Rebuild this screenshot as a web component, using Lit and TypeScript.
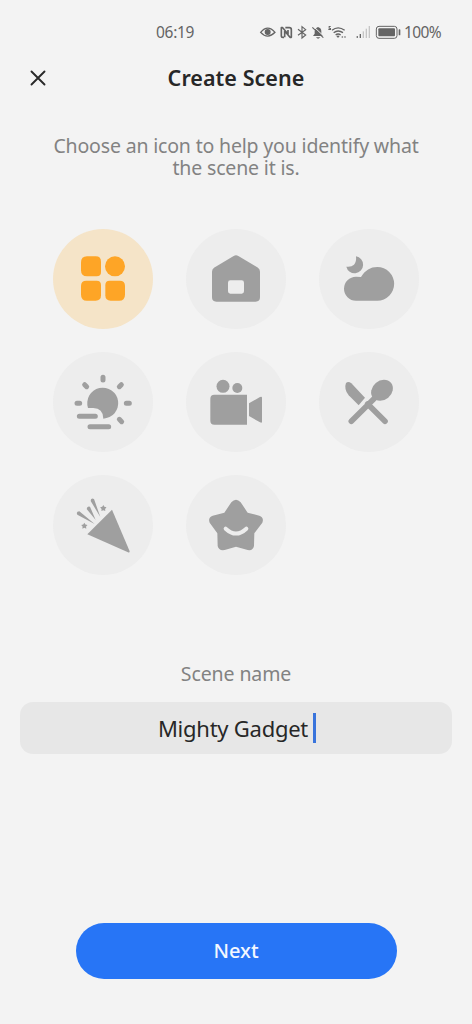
import { LitElement, html, svg, css } from "lit";
import { customElement, state } from "lit/decorators.js";

const star = (x: number, y: number, r: number) => {
  const pts: string[] = [];
  for (let i = 0; i < 10; i++) {
    const a = -Math.PI / 2 + (i * Math.PI) / 5;
    const q = i % 2 ? r * 0.55 : r;
    pts.push(`${(x + q * Math.cos(a)).toFixed(1)},${(y + q * Math.sin(a)).toFixed(1)}`);
  }
  return svg`<polygon points=${pts.join(" ")}/>`;
};

const icons = [
  {
    name: "Blocks",
    box: "24 27 300 300",
    art: svg`<path d="M126 109H152Q168 109 168 125V156Q168 169 155 169H126Q108 169 108 151V127Q108 109 126 109Z"/>
      <circle cx="210" cy="139" r="30"/>
      <path d="M124 182H155Q168 182 168 195V226Q168 242 152 242H126Q108 242 108 224V198Q108 182 124 182Z"/>
      <path d="M194 182H224Q240 182 240 198V224Q240 242 222 242H197Q181 242 181 226V195Q181 182 194 182Z"/>`,
  },
  {
    name: "Home",
    box: "30 27 300 300",
    art: svg`<path fill-rule="evenodd" d="M173 108Q180 103 187 108L246 143Q252 147 252 155V232Q252 245 239 245H121Q108 245 108 232V155Q108 147 114 143ZM163 181Q156 181 156 188V214Q156 221 163 221H197Q204 221 204 214V188Q204 181 197 181Z"/>`,
  },
  {
    name: "Night",
    box: "30 27 300 300",
    art: svg`<path d="M141 109A25.500 25.500 0 1 1 112 140Q127 142 135 134Q143 126 141 109Z"/>
      <path d="M141 242A36 36 0 0 1 141 170Q149 170 156 171C169 151 184 141 205 141A50.500 50.500 0 0 1 205 242Z"/>`,
  },
  {
    name: "Sunrise",
    box: "30 27 300 300",
    art: svg`<path d="M135 195A46.500 46.500 0 1 1 181 227Q180 195 151 195Z"/>
      <g class="line" stroke-width="15"><path d="M180 103V111M125 125L131 131M235 125L229 131M102 181H110M250 181H259M229 229L236 236M109 220H157M141 251H197"/></g>`,
  },
  {
    name: "Movie",
    box: "30 27 300 300",
    art: svg`<circle cx="141" cy="130" r="19.500"/><circle cx="184" cy="135" r="15"/>
      <path d="M115 155H213V245H115Q103 245 103 233V167Q103 155 115 155ZM219 181L252 162Q258 159 258 164V236Q258 241 252 238L219 219Z"/>`,
  },
  {
    name: "Dining",
    box: "30 27 300 300",
    art: svg`<path d="M111 120Q118 113 127 121L168 164L149 187L119 157Q104 138 111 120Z"/>
      <path class="line" stroke-width="17" d="M127 235L195 167M176 183L228 235"/>
      <ellipse cx="219" cy="142" rx="35" ry="29" transform="rotate(-40 219 142)"/>`,
  },
  {
    name: "Party",
    box: "30 27 300 300",
    art: svg`<path d="M207 131L260 256Q260 261 255 259L133 205Z"/>
      <path d="M109 136L155 174L103 146Q98 137 109 136ZM141 122L158 162L131 129Q132 119 141 122ZM153 99L172 153L143 105Q143 94 153 99Z"/>
      ${star(181, 127, 10)}${star(124, 180, 10)}`,
  },
  {
    name: "Star",
    box: "30 27 300 300",
    art: svg`<path d="M166 109Q180 94 194 109L215 140L250 149Q265 155 259 170L235 202L234 240Q231 255 215 252L180 242L146 252Q128 255 125 240L124 202L101 170Q95 155 110 149L145 140Z"/>
      <path class="smile" d="M149 188Q180 217 211 188"/>`,
  },
];

@customElement("app-root")
export class AppRoot extends LitElement {
  @state() private selected = 0;

  static styles = css`
    :host {
      display: flex;
      flex-direction: column;
      align-items: center;
      box-sizing: border-box;
      width: 100%;
      height: 1024px;
      background: #f3f3f3;
      font-family: "Noto Sans", sans-serif;
      color: #272727;
      overflow: hidden;
    }
    .status {
      display: flex;
      align-items: center;
      align-self: stretch;
      height: 24px;
      padding: 20px 30px 0 156px;
      font-size: 15.5px;
      color: #646464;
      white-space: nowrap;
    }
    .time { flex: 1; letter-spacing: -0.3px; }
    .signals { width: 144px; height: 16px; display: block; }
    .battery { width: 38px; margin-left: 2px; letter-spacing: -0.6px; }
    .header {
      display: grid;
      grid-template-columns: 16px 1fr 16px;
      align-items: center;
      align-self: stretch;
      height: 36px;
      padding: 0 30px;
      margin-top: 16px;
    }
    .close {
      border: 0;
      padding: 0;
      background: none;
      height: 16px;
    }
    .close svg { display: block; width: 16px; height: 16px; }
    h1 {
      margin: 0;
      text-align: center;
      font-size: 21.5px;
      line-height: 30px;
      font-weight: 600;
      letter-spacing: 0.05px;
    }
    .hint {
      margin: 39px 0 0;
      width: 380px;
      text-align: center;
      font-size: 19.5px;
      line-height: 22px;
      letter-spacing: -0.17px;
      color: #828282;
    }
    .grid {
      display: grid;
      grid-template-columns: repeat(3, 100px);
      gap: 23px 33px;
      margin-top: 50px;
    }
    .choice {
      width: 100px;
      height: 100px;
      padding: 0;
      border: 0;
      border-radius: 50%;
      background: #ededed;
      color: #9f9f9f;
    }
    .choice.on { background: #f5e4c8; color: #fea526; }
    .choice svg { display: block; width: 100px; height: 100px; fill: currentColor; }
    .choice .line { fill: none; stroke: currentColor; stroke-linecap: round; }
    .choice .smile { fill: none; stroke: #ededed; stroke-width: 12; stroke-linecap: round; }
    .label {
      margin-top: 86px;
      font-size: 19.5px;
      line-height: 26px;
      color: #828282;
      letter-spacing: -0.1px;
    }
    .field {
      display: flex;
      align-items: center;
      justify-content: center;
      box-sizing: border-box;
      width: 432px;
      height: 52px;
      margin-top: 15px;
      padding-left: 2px;
      border-radius: 13px;
      background: #e7e7e7;
      font-size: 22px;
      white-space: pre;
    }
    .value { letter-spacing: -0.25px; line-height: 30px; padding-bottom: 1px; }
    .caret { width: 3px; height: 30px; margin-left: 5px; background: #3974dc; }
    .next {
      width: 321px;
      height: 56px;
      margin-top: 169px;
      padding: 0;
      border: 0;
      border-radius: 28px;
      background: #2775f6;
      color: #f3f8ff;
      font: 500 20px/56px "Noto Sans", sans-serif;
    }
  `;

  private signals() {
    return svg`
      <g fill="none" stroke="#646464" stroke-width="4">
        <path d="M32 52Q53 27 75 52Q53 75 32 52Z"/>
        <circle cx="53" cy="51" r="7" fill="#646464"/>
        <path stroke-width="5" stroke-linejoin="round" d="M102 67H99Q94 67 94 62V38H98L114 57V45M104 48V67M106 38H118Q124 38 124 44V67H120L104 48"/>
        <path stroke-width="3.500" d="M144 43L167 60L156 69V35L167 44L144 61"/>
        <path stroke-width="3.500" d="M187 37L220 68"/>
        <path d="M246 46Q264 31 284 46M251 53Q264 43 279 53M257 60Q264 54 272 60" stroke-width="4"/>
        <rect x="379" y="34" width="62" height="36" rx="8" stroke-width="3"/>
      </g>
      <g fill="#646464">
        <path d="M189 63L194 56V49Q195 39 204 36Q214 39 214 49V56L219 63ZM198 67H211Q204 75 198 67Z"/>
        <path d="M259 63Q264 60 269 63L264 69Z"/>
        <path d="M236 33H242V36H239V39H243V45H235V42H240V41H236Z"/>
        <circle cx="277" cy="66" r="2.500"/><circle cx="285" cy="66" r="2.500"/>
        <rect x="320" y="63" width="3.500" height="6"/><rect x="329" y="57" width="4" height="12"/>
        <g fill="#c5c5c5"><rect x="338" y="49" width="4" height="20"/><rect x="347" y="41" width="4" height="28"/><rect x="356" y="33" width="4" height="36"/></g>
        <rect x="385" y="40" width="50" height="24" rx="3"/>
        <rect x="446" y="43" width="5" height="18" rx="2"/>
      </g>
      <path d="M190 34L223 65" stroke="#f3f3f3" stroke-width="3"/>`;
  }

  render() {
    return html`
      <div class="status">
        <span class="time">06:19</span>
        <svg class="signals" viewBox="24 27 432 48">${this.signals()}</svg>
        <span class="battery">100%</span>
      </div>
      <header class="header">
        <button class="close" aria-label="Close">
          <svg viewBox="0 0 16 16"><path d="M1.500 1.500L14.500 14.500M14.500 1.500L1.500 14.500" fill="none" stroke="#292929" stroke-width="1.900" stroke-linecap="round"/></svg>
        </button>
        <h1>Create Scene</h1>
      </header>
      <p class="hint">Choose an icon to help you identify what<br />the scene it is.</p>
      <div class="grid">
        ${icons.map(
          (icon, i) => html`<button
            class="choice ${i === this.selected ? "on" : ""}"
            aria-label=${icon.name}
            @click=${() => (this.selected = i)}
          ><svg viewBox=${icon.box}>${icon.art}</svg></button>`
        )}
      </div>
      <div class="label">Scene name</div>
      <div class="field"><span class="value">Mighty Gadget</span><span class="caret"></span></div>
      <button class="next">Next</button>
    `;
  }
}
